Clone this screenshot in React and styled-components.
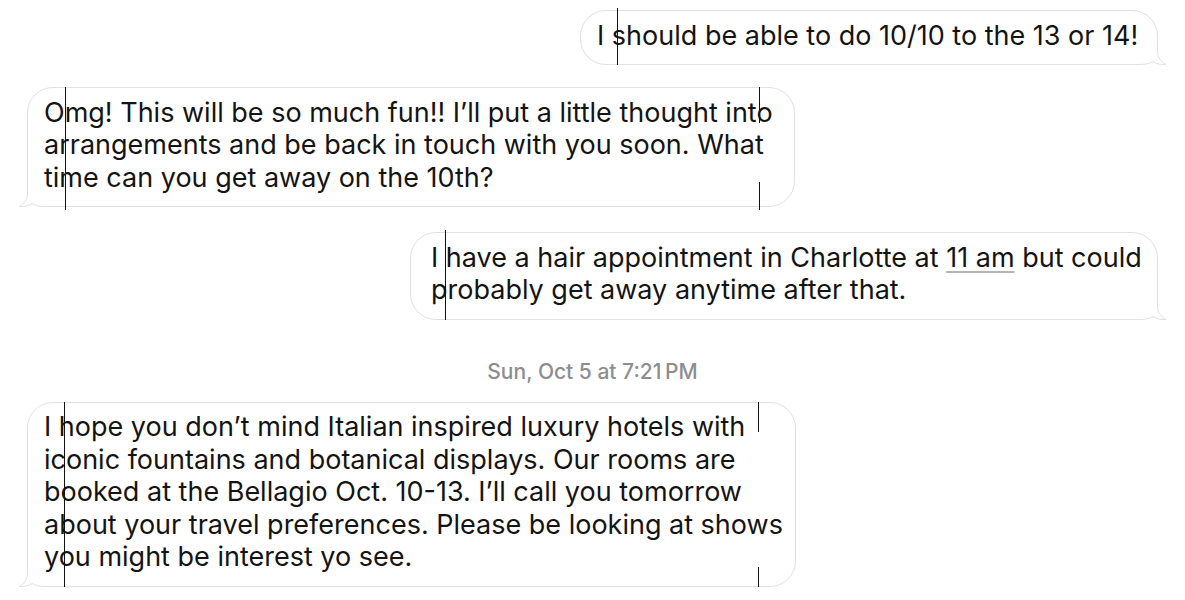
import React from 'react';
import styled, { createGlobalStyle } from 'styled-components';

const GlobalStyle = createGlobalStyle`
  html, body {
    margin: 0;
    padding: 0;
    background: #fff;
  }
  body {
    font-family: Inter, "Liberation Sans", Arial, sans-serif;
    -webkit-font-smoothing: antialiased;
  }
`;

const Thread = styled.div`
  display: flex;
  flex-direction: column;
  padding: 0 27px;
  width: 1185px;
  box-sizing: border-box;
`;

const Row = styled.div`
  display: flex;
  justify-content: ${p => (p.$out ? 'flex-end' : 'flex-start')};
  margin-top: ${p => p.$mt}px;
`;

const Bubble = styled.div`
  position: relative;
  box-sizing: border-box;
  width: ${p => p.$w}px;
  padding: 8.5px 16px 12px ${p => p.$pl || 16}px;
  border: 1px solid #e1e1e1;
  border-radius: 26px;
  background: #fff;
  color: #141414;
  font-size: 27px;
  line-height: 32.5px;
`;

const Line = styled.span`
  position: relative;
  z-index: 1;
  display: block;
  white-space: nowrap;
`;

const Link = styled.span`
  text-decoration: underline;
  text-decoration-color: #b4b4b4;
  text-decoration-thickness: 2px;
  text-underline-offset: 4px;
`;

const TailSvg = styled.svg`
  position: absolute;
  bottom: -1px;
  ${p => (p.$out ? 'right: -10px; transform: scaleX(-1);' : 'left: -10px;')}
  width: 40px;
  height: 30px;
  z-index: 0;
  overflow: visible;
`;

const Caret = styled.span`
  position: absolute;
  z-index: 2;
  left: ${p => p.$x}px;
  top: ${p => p.$y}px;
  width: 1px;
  height: ${p => p.$h}px;
  background: #111;
`;

const Stamp = styled.div`
  margin-top: ${p => p.$mt}px;
  text-align: center;
  font-size: 21px;
  line-height: 24px;
  font-weight: 500;
  color: #8d8d8f;
`;

function Tail({ out }) {
  return (
    <TailSvg $out={out} viewBox="0 0 40 30">
      <path
        d="M9.5 0 L9.5 16 C9.5 23 6 27 1 29.5 C6 30 11 28.5 14 26.5 C17 28.5 22 29.5 28 29.5 L40 29.5 L40 0 Z"
        fill="#fff"
      />
      <path
        d="M9.5 0 L9.5 16 C9.5 23 6 27 1 29.5 C6 30 11 28.5 14 26.5 C17 28.5 22 29.5 28 29.5 L40 29.5"
        fill="none"
        stroke="#e1e1e1"
        strokeWidth="1"
      />
    </TailSvg>
  );
}

const messages = [
  {
    out: true, mt: 10, w: 578,
    lines: ['I should be able to do 10/10 to the 13 or 14!'],
    carets: [[36, -3, 57]],
  },
  {
    out: false, mt: 22, w: 768,
    lines: [
      'Omg! This will be so much fun!! I’ll put a little thought into',
      'arrangements and be back in touch with you soon. What',
      'time can you get away on the 10th?',
    ],
    carets: [[37, -1, 123], [731, -1, 36], [731, 94, 28]],
  },
  {
    out: true, mt: 25, w: 748, pl: 20,
    lines: [
      <>I have a hair appointment in Charlotte at <Link>11 am</Link> but could</>,
      'probably get away anytime after that.',
    ],
    carets: [[34, -3, 90]],
  },
  { stamp: 'Sun, Oct 5 at 7:21\u202FPM', mt: 40 },
  {
    out: false, mt: 18, w: 769,
    lines: [
      'I hope you don’t mind Italian inspired luxury hotels with',
      'iconic fountains and botanical displays. Our rooms are',
      'booked at the Bellagio Oct. 10-13. I’ll call you tomorrow',
      'about your travel preferences. Please be looking at shows',
      'you might be interest yo see.',
    ],
    carets: [[36, -1, 191], [730, -1, 30], [730, 164, 25]],
  },
];

export default function App() {
  return (
    <>
      <GlobalStyle />
      <Thread>
        {messages.map((m, i) =>
          m.stamp ? (
            <Stamp key={i} $mt={m.mt}>{m.stamp}</Stamp>
          ) : (
            <Row key={i} $out={m.out} $mt={m.mt}>
              <Bubble $w={m.w} $pl={m.pl}>
                {m.lines.map((l, j) => (
                  <Line key={j}>{l}</Line>
                ))}
                <Tail out={m.out} />
                {m.carets.map(([x, y, h], k) => (
                  <Caret key={k} $x={x} $y={y} $h={h} />
                ))}
              </Bubble>
            </Row>
          )
        )}
      </Thread>
    </>
  );
}
